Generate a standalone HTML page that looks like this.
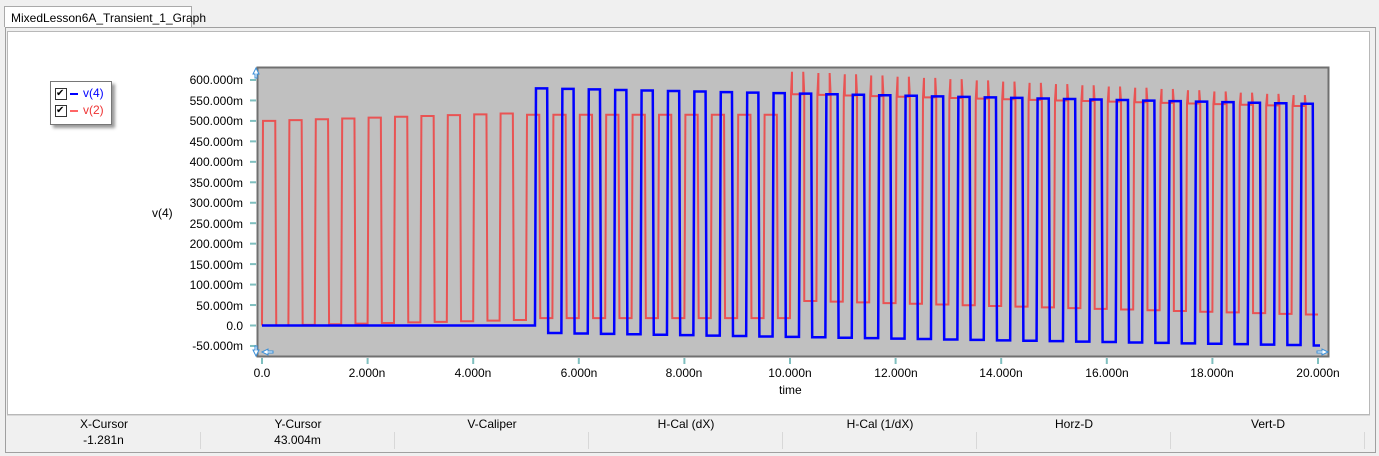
<!DOCTYPE html>
<html><head><meta charset="utf-8"><style>
body{margin:0;width:1379px;height:456px;background:#f0f0f0;font-family:"Liberation Sans",sans-serif;position:relative;overflow:hidden}
.abs{position:absolute}
.tab{left:4px;top:6px;width:188px;height:21px;background:#fff;border:1px solid #aaa;border-bottom:none;font-size:12px;line-height:22px;padding-left:6px;box-sizing:border-box}
.panel{left:5px;top:27px;width:1371px;height:426px;border:1px solid #a0a0a0;box-sizing:border-box;background:#f0f0f0}
.inner{left:7px;top:31px;width:1363px;height:384px;background:#fff;border:1px solid #b8b8b8;box-sizing:border-box}
.yl{position:absolute;right:1136px;font-size:12px;text-align:right;white-space:nowrap}
.xl{position:absolute;font-size:12px;transform:translateX(-50%);white-space:nowrap;top:366px}
.hdr,.val{position:absolute;left:7px;width:1363px;display:flex;font-size:12px}
.hdr{top:415px;height:16px;border-top:1px solid #d8d8d8;border-bottom:1px solid #d8d8d8;background:#f0f0f0}
.val{top:432px;height:17px;background:#f0f0f0}
.hdr div,.val div{width:194px;text-align:center;line-height:16px}
.val div{border-right:1px solid #d8d8d8;box-sizing:border-box}
</style></head><body>
<div class="abs panel"></div>
<div class="abs tab">MixedLesson6A_Transient_1_Graph</div>
<div class="abs inner"></div>
<div class="abs" style="left:50px;top:81px;width:60px;height:42px;background:#fff;border:1px solid #777;box-shadow:3px 3px 3px #999;font-size:12px">
<div style="position:absolute;left:4px;top:6px;width:10px;height:10px;border:1px solid #333;font-size:10px;line-height:10px">✔</div>
<div style="position:absolute;left:19px;top:11px;width:8px;height:2px;background:#00f"></div>
<div style="position:absolute;left:32px;top:4px;color:#00f">v(4)</div>
<div style="position:absolute;left:4px;top:23px;width:10px;height:10px;border:1px solid #333;font-size:10px;line-height:10px">✔</div>
<div style="position:absolute;left:19px;top:28px;width:8px;height:2px;background:#f66"></div>
<div style="position:absolute;left:32px;top:21px;color:#e33">v(2)</div>
</div>
<div class="yl" style="top:73px">600.000m</div>
<div class="yl" style="top:94px">550.000m</div>
<div class="yl" style="top:114px">500.000m</div>
<div class="yl" style="top:135px">450.000m</div>
<div class="yl" style="top:155px">400.000m</div>
<div class="yl" style="top:176px">350.000m</div>
<div class="yl" style="top:196px">300.000m</div>
<div class="yl" style="top:217px">250.000m</div>
<div class="yl" style="top:237px">200.000m</div>
<div class="yl" style="top:258px">150.000m</div>
<div class="yl" style="top:278px">100.000m</div>
<div class="yl" style="top:299px">50.000m</div>
<div class="yl" style="top:319px">0.0</div>
<div class="yl" style="top:339px">-50.000m</div>
<div class="abs" style="left:152px;top:206px;font-size:12px">v(4)</div>
<div class="xl" style="left:262px">0.0</div>
<div class="xl" style="left:367px">2.000n</div>
<div class="xl" style="left:473px">4.000n</div>
<div class="xl" style="left:579px">6.000n</div>
<div class="xl" style="left:684px">8.000n</div>
<div class="xl" style="left:790px">10.000n</div>
<div class="xl" style="left:896px">12.000n</div>
<div class="xl" style="left:1001px">14.000n</div>
<div class="xl" style="left:1107px">16.000n</div>
<div class="xl" style="left:1212px">18.000n</div>
<div class="xl" style="left:1318px">20.000n</div>
<div class="abs" style="left:779px;top:383px;font-size:12px">time</div>
<svg class="abs" style="left:0;top:0" width="1379" height="456">
<rect x="257.5" y="67.5" width="1071" height="289" fill="#c0c0c0" stroke="#707070" stroke-width="2"/>
<g id="ticks" stroke="#7fbfbf" stroke-width="2"></g>
<path id="red" fill="none" stroke="#f04040" stroke-opacity="0.85" stroke-width="2"/>
<path id="blue" fill="none" stroke="#0000ff" stroke-width="2.5"/>
<path d="M256 68 l-3 6 h2 v4 h2 v-4 h2z M256 356 l-3 -6 h2 v-4 h2 v4 h2z M262 352 l6 -3 v2 h5 v2 h-5 v2z M1328 352 l-6 -3 v2 h-5 v2 h5 v2z" fill="#fff" stroke="#3a8fd8" stroke-width="1"/>
</svg>
<div class="hdr"><div>X-Cursor</div><div>Y-Cursor</div><div>V-Caliper</div><div>H-Cal (dX)</div><div>H-Cal (1/dX)</div><div>Horz-D</div><div>Vert-D</div></div>
<div class="val"><div>-1.281n</div><div>43.004m</div><div></div><div></div><div></div><div></div><div></div></div>
<script>
var X=function(t){return 262+52.8*t},Y=function(v){return 325.5-v*0.4092};
var tk='';
for(var i=0;i<14;i++){var y=Y(600-50*i);tk+='<line x1="250" x2="256" y1="'+y+'" y2="'+y+'"/>';}
for(var i=0;i<=10;i++){var x=X(2*i);tk+='<line x1="'+x+'" x2="'+x+'" y1="358" y2="364"/>';}
document.getElementById('ticks').innerHTML=tk;
var r='M'+X(0)+' '+Y(0);
for(var k=0;k<40;k++){var t=k*0.5,hi,lo,sp=0;
 if(t<5){hi=500+4*t;lo=3*t;}else if(t<10){hi=515;lo=18;}else{hi=565-3*(t-10);lo=60-3.5*(t-10);sp=hi+55-3*(t-10);}
 var x0=X(t),x1=X(t+0.27),x2=X(t+0.5);
 r+=' L'+(x0+1)+' '+Y(hi);
 if(sp){r+=' L'+(x0+2)+' '+Y(sp)+' L'+(x0+2)+' '+Y(hi);}
 r+=' L'+(x1-1)+' '+Y(hi);
 if(sp){r+=' L'+(x1-1)+' '+Y(sp)+' L'+x1+' '+Y(hi);}
 r+=' L'+x1+' '+Y(lo)+' L'+Math.min(x2,1318)+' '+Y(lo);}
document.getElementById('red').setAttribute('d',r);
var b='M'+X(0)+' '+Y(0)+' L'+X(5.17)+' '+Y(0);
for(var k=0;k<30;k++){var t=5.17+k*0.5;if(t>20)break;
 var hi=580-(t-5)*2.6,lo=-18-(t-5)*2.1;
 var x0=X(t),x1=X(t+0.25),x2=Math.min(X(t+0.5),1320);
 b+=' L'+(x0+1)+' '+Y(hi)+' L'+(x1-1)+' '+Y(hi)+' L'+x1+' '+Y(lo)+' L'+x2+' '+Y(lo);}
document.getElementById('blue').setAttribute('d',b);
</script>
</body></html>
